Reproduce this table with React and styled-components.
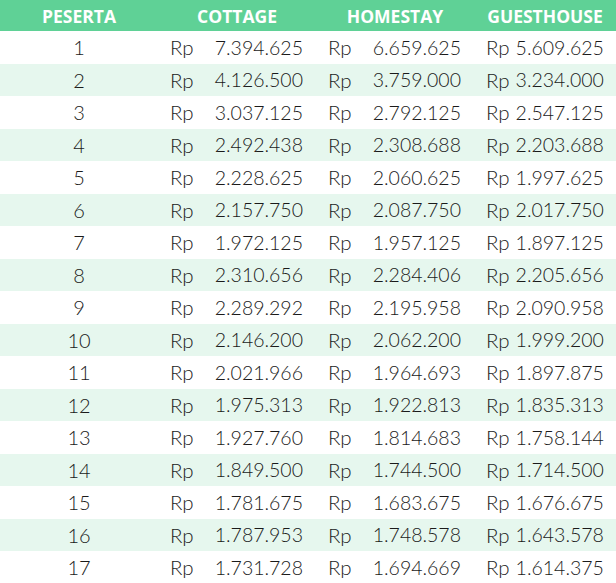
import React from "react";
import styled, { createGlobalStyle } from "styled-components";

const GlobalStyle = createGlobalStyle`
  html, body {
    margin: 0;
    padding: 0;
    background: #fff;
  }
`;

const Table = styled.table`
  width: 616px;
  border-collapse: collapse;
  table-layout: fixed;
  font-family: "Lato", "Noto Sans", sans-serif;
  color: #1a1a1a;
`;

const HeadCell = styled.th`
  height: 31px;
  padding: 0;
  background: #5fd196;
  color: #fff;
  font-family: "Open Sans", "Noto Sans", sans-serif;
  font-weight: 700;
  font-size: 17.5px;
  text-align: center;
  width: ${p => p.w}px;
`;

const Row = styled.tr`
  height: 32.5px;
  background: ${p => (p.alt ? "#e6f7ee" : "#fff")};
`;

const NumCell = styled.td`
  padding: 0;
  text-align: center;
  font-size: 20px;
  font-weight: 300;
`;

const MoneyCell = styled.td`
  padding: 0 13px 0 12px;
  font-size: 19.5px;
  font-weight: 300;
`;

const Money = styled.div`
  display: flex;
  justify-content: space-between;
  align-items: center;
  gap: 6px;
`;

const Currency = styled.span`
  font-size: 20.5px;
`;

const data = [
  ["7.394.625", "6.659.625", "5.609.625"],
  ["4.126.500", "3.759.000", "3.234.000"],
  ["3.037.125", "2.792.125", "2.547.125"],
  ["2.492.438", "2.308.688", "2.203.688"],
  ["2.228.625", "2.060.625", "1.997.625"],
  ["2.157.750", "2.087.750", "2.017.750"],
  ["1.972.125", "1.957.125", "1.897.125"],
  ["2.310.656", "2.284.406", "2.205.656"],
  ["2.289.292", "2.195.958", "2.090.958"],
  ["2.146.200", "2.062.200", "1.999.200"],
  ["2.021.966", "1.964.693", "1.897.875"],
  ["1.975.313", "1.922.813", "1.835.313"],
  ["1.927.760", "1.814.683", "1.758.144"],
  ["1.849.500", "1.744.500", "1.714.500"],
  ["1.781.675", "1.683.675", "1.676.675"],
  ["1.787.953", "1.748.578", "1.643.578"],
  ["1.731.728", "1.694.669", "1.614.375"]
];

export default function App() {
  return (
    <>
      <GlobalStyle />
      <Table>
        <thead>
          <tr>
            <HeadCell w={158}>PESERTA</HeadCell>
            <HeadCell w={158}>COTTAGE</HeadCell>
            <HeadCell w={158}>HOMESTAY</HeadCell>
            <HeadCell w={142}>GUESTHOUSE</HeadCell>
          </tr>
        </thead>
        <tbody>
          {data.map((row, i) => (
            <Row key={i} alt={i % 2 === 1}>
              <NumCell>{i + 1}</NumCell>
              {row.map((v, j) => (
                <MoneyCell key={j}>
                  <Money>
                    <Currency>Rp</Currency>
                    <span>{v}</span>
                  </Money>
                </MoneyCell>
              ))}
            </Row>
          ))}
        </tbody>
      </Table>
    </>
  );
}
